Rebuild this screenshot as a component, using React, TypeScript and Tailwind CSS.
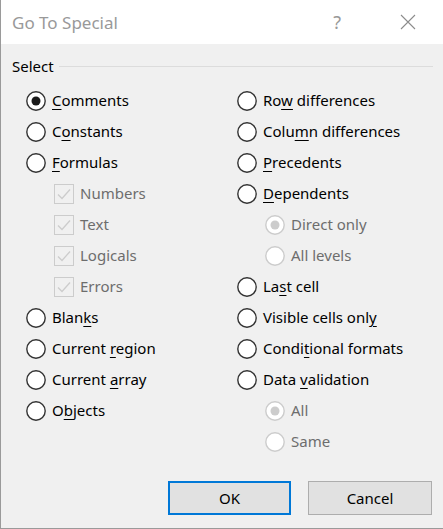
import React from 'react';

// Go To Special dialog (Excel)

type Item = {
  label: string;
  key?: number; // index of the underlined access key
  kind: 'radio' | 'check';
  checked?: boolean;
  disabled?: boolean;
  indent?: boolean;
};

const LEFT: Item[] = [
  { label: 'Comments', key: 0, kind: 'radio', checked: true },
  { label: 'Constants', key: 1, kind: 'radio' },
  { label: 'Formulas', key: 0, kind: 'radio' },
  { label: 'Numbers', kind: 'check', checked: true, disabled: true, indent: true },
  { label: 'Text', kind: 'check', checked: true, disabled: true, indent: true },
  { label: 'Logicals', kind: 'check', checked: true, disabled: true, indent: true },
  { label: 'Errors', kind: 'check', checked: true, disabled: true, indent: true },
  { label: 'Blanks', key: 4, kind: 'radio' },
  { label: 'Current region', key: 8, kind: 'radio' },
  { label: 'Current array', key: 8, kind: 'radio' },
  { label: 'Objects', key: 1, kind: 'radio' },
];

const RIGHT: Item[] = [
  { label: 'Row differences', key: 2, kind: 'radio' },
  { label: 'Column differences', key: 4, kind: 'radio' },
  { label: 'Precedents', key: 0, kind: 'radio' },
  { label: 'Dependents', key: 0, kind: 'radio' },
  { label: 'Direct only', kind: 'radio', checked: true, disabled: true, indent: true },
  { label: 'All levels', kind: 'radio', disabled: true, indent: true },
  { label: 'Last cell', key: 2, kind: 'radio' },
  { label: 'Visible cells only', key: 17, kind: 'radio' },
  { label: 'Conditional formats', key: 5, kind: 'radio' },
  { label: 'Data validation', key: 5, kind: 'radio' },
  { label: 'All', kind: 'radio', checked: true, disabled: true, indent: true },
  { label: 'Same', kind: 'radio', disabled: true, indent: true },
];

function Radio({ checked, disabled }: { checked?: boolean; disabled?: boolean }) {
  const stroke = disabled ? '#cccccc' : '#333333';
  return (
    <svg width="20" height="20" viewBox="0 0 20 20" className="shrink-0">
      <circle cx="10" cy="10" r="9.2" fill="#ffffff" stroke={stroke} strokeWidth="1.4" />
      {checked && <circle cx="10" cy="10" r="4.5" fill={disabled ? '#cccccc' : '#1a1a1a'} />}
    </svg>
  );
}

function Check({ checked }: { checked?: boolean }) {
  return (
    <svg width="20" height="20" viewBox="0 0 20 20" className="shrink-0">
      <rect x="0.5" y="0.5" width="19" height="19" fill="#f0f0f0" stroke="#cccccc" strokeWidth="1" />
      {checked && <polyline points="4,10.5 8,14.5 16,5.5" fill="none" stroke="#cccccc" strokeWidth="1.3" />}
    </svg>
  );
}

function Label({ text, k }: { text: string; k?: number }) {
  if (k === undefined) return <span>{text}</span>;
  return (
    <span>
      {text.slice(0, k)}
      <span className="underline underline-offset-[3px]">{text[k]}</span>
      {text.slice(k + 1)}
    </span>
  );
}

function Row({ item }: { item: Item }) {
  return (
    <div
      className={`flex h-[31px] items-center gap-[6px] ${item.indent ? 'pl-[28px]' : ''} ${
        item.disabled ? 'text-[#6d6d6d]' : 'text-black'
      }`}
    >
      {item.kind === 'radio' ? (
        <Radio checked={item.checked} disabled={item.disabled} />
      ) : (
        <Check checked={item.checked} />
      )}
      <Label text={item.label} k={item.key} />
    </div>
  );
}

export default function App() {
  return (
    <div
      className="w-[443px] h-[529px] bg-[#f0f0f0] border-l border-b border-[#9a9a9a] flex flex-col text-[15px] leading-none"
      style={{ fontFamily: '"Noto Sans", "Open Sans", Arial, sans-serif' }}
    >
      {/* Title bar */}
      <header className="h-[44px] bg-white flex items-center pl-[11px] shrink-0">
        <h1 className="text-[17px] text-[#999999] font-normal">Go To Special</h1>
        <span className="ml-auto mr-[59px] text-[18px] text-[#999999]">?</span>
        <svg width="16" height="16" viewBox="0 0 16 16" className="mr-[27px]">
          <path d="M1 1 L15 15 M15 1 L1 15" stroke="#8c8c8c" strokeWidth="1.1" />
        </svg>
      </header>

      {/* Select group */}
      <div className="pt-[13px] pl-[11px] pr-[10px]">
        <div className="flex h-[18px] items-center gap-[5px]">
          <span className="text-black">Select</span>
          <div className="flex-1 h-px bg-[#dcdcdc]" />
        </div>
      </div>

      <div className="mt-[10px] grid grid-cols-[211px_1fr] pl-[25px]">
        <div className="flex flex-col">
          {LEFT.map((it) => (
            <Row key={it.label} item={it} />
          ))}
        </div>
        <div className="flex flex-col">
          {RIGHT.map((it) => (
            <Row key={it.label} item={it} />
          ))}
        </div>
      </div>

      {/* Buttons */}
      <div className="mt-auto mb-[13px] flex justify-end gap-[17px] pr-[11px]">
        <button className="w-[123px] h-[34px] bg-[#e1e1e1] border-2 border-[#0078d7] text-black">OK</button>
        <button className="w-[124px] h-[34px] bg-[#e1e1e1] border border-[#adadad] text-black">Cancel</button>
      </div>
    </div>
  );
}
